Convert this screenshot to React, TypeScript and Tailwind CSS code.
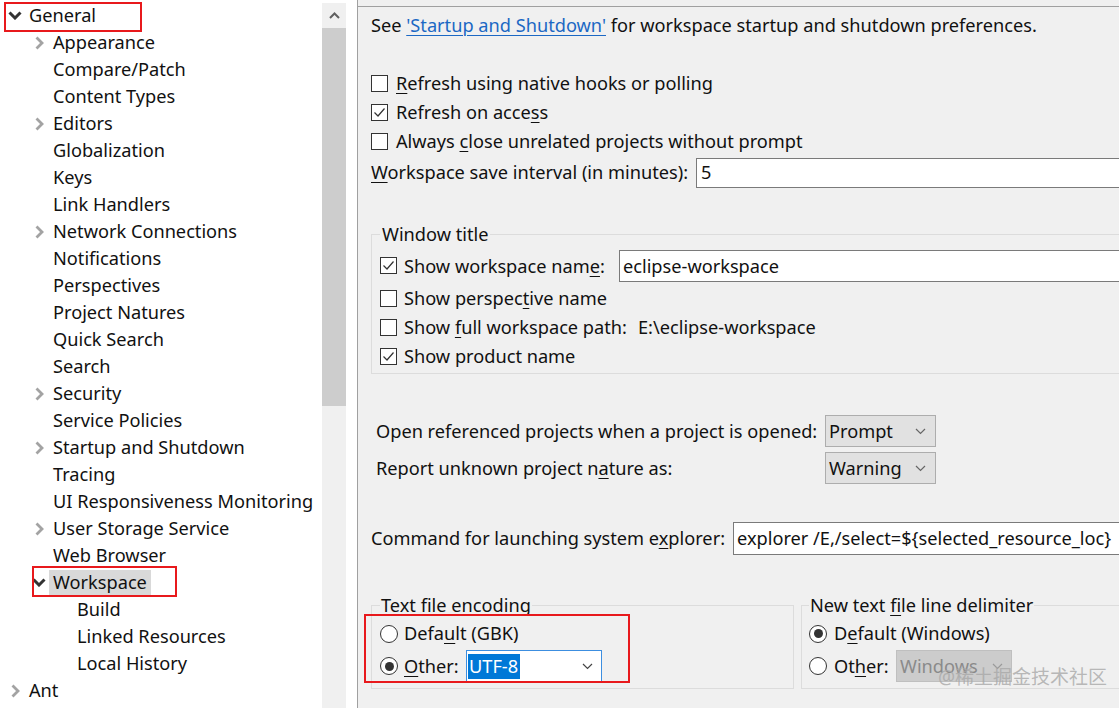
import React from 'react';

const FONT = "font-['Noto_Sans','Noto_Sans_CJK_SC',sans-serif]";

type Node = { label: string; level: number; state?: 'open' | 'closed'; selected?: boolean };

const TREE: Node[] = [
  { label: 'General', level: 0, state: 'open' },
  { label: 'Appearance', level: 1, state: 'closed' },
  { label: 'Compare/Patch', level: 1 },
  { label: 'Content Types', level: 1 },
  { label: 'Editors', level: 1, state: 'closed' },
  { label: 'Globalization', level: 1 },
  { label: 'Keys', level: 1 },
  { label: 'Link Handlers', level: 1 },
  { label: 'Network Connections', level: 1, state: 'closed' },
  { label: 'Notifications', level: 1 },
  { label: 'Perspectives', level: 1 },
  { label: 'Project Natures', level: 1 },
  { label: 'Quick Search', level: 1 },
  { label: 'Search', level: 1 },
  { label: 'Security', level: 1, state: 'closed' },
  { label: 'Service Policies', level: 1 },
  { label: 'Startup and Shutdown', level: 1, state: 'closed' },
  { label: 'Tracing', level: 1 },
  { label: 'UI Responsiveness Monitoring', level: 1 },
  { label: 'User Storage Service', level: 1, state: 'closed' },
  { label: 'Web Browser', level: 1 },
  { label: 'Workspace', level: 1, state: 'open', selected: true },
  { label: 'Build', level: 2 },
  { label: 'Linked Resources', level: 2 },
  { label: 'Local History', level: 2 },
  { label: 'Ant', level: 0, state: 'closed' },
];

const PAD = ['pl-[5px]', 'pl-[29px]', 'pl-[53px]'];

function ChevronDown() {
  return (
    <svg width="14" height="9" viewBox="0 0 14 9" className="ml-[3px]">
      <path d="M1.5 1.5 L7 7 L12.5 1.5" fill="none" stroke="#333" strokeWidth="3" />
    </svg>
  );
}

function ChevronRight() {
  return (
    <svg width="9" height="14" viewBox="0 0 9 14" className="ml-[6px]">
      <path d="M1.5 1.5 L7 7 L1.5 12.5" fill="none" stroke="#a3a3a3" strokeWidth="2.8" />
    </svg>
  );
}

function Tree() {
  return (
    <div className="w-[322px] shrink-0 bg-white pt-[2px]">
      {TREE.map((n) => (
        <div key={n.label} className={`flex items-center h-[27px] ${PAD[n.level]}`}>
          <span className="w-[24px] shrink-0 flex items-center">
            {n.state === 'open' && <ChevronDown />}
            {n.state === 'closed' && <ChevronRight />}
          </span>
          <span
            className={`whitespace-nowrap ${n.selected ? 'bg-[#d9d9d9] -ml-[4px] px-[4px] h-[25px] flex items-center' : ''}`}
          >
            {n.label}
          </span>
        </div>
      ))}
    </div>
  );
}

function Scrollbar() {
  return (
    <div className="w-[24px] shrink-0 mt-[3px] bg-[#f0f0f0] flex flex-col">
      <div className="h-[25px] flex items-center justify-center">
        <svg width="11" height="7" viewBox="0 0 11 7">
          <path d="M1 6 L5.5 1.5 L10 6" fill="none" stroke="#606060" strokeWidth="2" />
        </svg>
      </div>
      <div className="h-[378px] bg-[#cdcdcd]" />
    </div>
  );
}

function Checkbox({ checked }: { checked?: boolean }) {
  return (
    <span className="w-[17px] h-[17px] shrink-0 border border-[#333] bg-white flex items-center justify-center">
      {checked && (
        <svg width="13" height="11" viewBox="0 0 13 11">
          <path d="M1.5 5.5 L5 9 L11.5 1.5" fill="none" stroke="#333" strokeWidth="1.2" />
        </svg>
      )}
    </span>
  );
}

function Radio({ checked }: { checked?: boolean }) {
  return (
    <span className="w-[18px] h-[18px] shrink-0 rounded-full border border-[#333] bg-white flex items-center justify-center">
      {checked && <span className="w-[9px] h-[9px] rounded-full bg-[#333]" />}
    </span>
  );
}

function U({ children }: { children: React.ReactNode }) {
  return <span className="underline underline-offset-[3px] decoration-1">{children}</span>;
}

function SmallChevron({ color }: { color: string }) {
  return (
    <svg width="11" height="7" viewBox="0 0 11 7">
      <path d="M1 1 L5.5 5.5 L10 1" fill="none" stroke={color} strokeWidth="1.2" />
    </svg>
  );
}

function Combo({ value }: { value: string }) {
  return (
    <div className="w-[111px] h-[32px] bg-[#e1e1e1] border border-[#adadad] flex items-center justify-between pl-[3px] pr-[9px]">
      <span>{value}</span>
      <SmallChevron color="#666" />
    </div>
  );
}

function Row({ checked, children }: { checked?: boolean; children: React.ReactNode }) {
  return (
    <div className="h-[29px] flex items-center gap-[8px]">
      <Checkbox checked={checked} />
      <span className="whitespace-nowrap">{children}</span>
    </div>
  );
}

export default function App() {
  return (
    <div className={`relative w-[1119px] h-[708px] overflow-hidden flex bg-white text-[18.2px] leading-none text-[#111] ${FONT}`}>
      <Tree />
      <Scrollbar />
      <div className="w-[11px] shrink-0 bg-white" />

      <div className="flex-1 border-l border-[#a0a0a0] bg-[#f0f0f0] pt-[6px]">
        <div className="w-[800px] h-full border-t border-[#a0a0a0] pl-[13px]">
          <div className="h-[36px] flex items-center whitespace-nowrap">
            See&nbsp;
            <span className="text-[#1c68c4] underline underline-offset-[3px] decoration-1">'Startup and Shutdown'</span>
            &nbsp;for workspace startup and shutdown preferences.
          </div>

          <div className="mt-[26px]">
            <Row>
              <U>R</U>efresh using native hooks or polling
            </Row>
            <Row checked>
              Refresh on acce<U>s</U>s
            </Row>
            <Row>
              Always <U>c</U>lose unrelated projects without prompt
            </Row>
          </div>

          <div className="mt-[1px] h-[31px] flex items-center">
            <span className="w-[325px] shrink-0 whitespace-nowrap">
              <U>W</U>orkspace save interval (in minutes):
            </span>
            <div className="flex-1 h-[30px] bg-white border border-[#7a7a7a] flex items-center pl-[4px]">5</div>
          </div>

          <fieldset className="mt-[33px] border border-[#dcdcdc] px-[8px] pb-[2px]">
            <legend className="px-[2px] leading-[26px]">Window title</legend>
            <div className="mt-[3px] h-[32px] flex items-center">
              <span className="w-[239px] shrink-0 flex items-center gap-[7px]">
                <Checkbox checked />
                <span className="whitespace-nowrap">
                  Show workspace nam<U>e</U>:
                </span>
              </span>
              <div className="flex-1 h-[32px] bg-white border border-[#7a7a7a] flex items-center pl-[3px]">
                eclipse-workspace
              </div>
            </div>
            <div className="mt-[2px] h-[29px] flex items-center gap-[7px]">
              <Checkbox />
              <span className="whitespace-nowrap">
                Show perspec<U>t</U>ive name
              </span>
            </div>
            <div className="h-[29px] flex items-center">
              <span className="w-[258px] shrink-0 flex items-center gap-[7px]">
                <Checkbox />
                <span className="whitespace-nowrap">
                  Show <U>f</U>ull workspace path:
                </span>
              </span>
              <span className="whitespace-nowrap">E:\eclipse-workspace</span>
            </div>
            <div className="h-[29px] flex items-center gap-[7px]">
              <Checkbox checked />
              <span className="whitespace-nowrap">Show product name</span>
            </div>
          </fieldset>

          <div className="mt-[41px] pl-[5px] flex flex-col gap-[5px]">
            <div className="flex items-center">
              <span className="w-[449px] shrink-0 whitespace-nowrap">Open referenced projects when a project is opened:</span>
              <Combo value="Prompt" />
            </div>
            <div className="flex items-center">
              <span className="w-[449px] shrink-0 whitespace-nowrap">
                Report unknown project n<U>a</U>ture as:
              </span>
              <Combo value="Warning" />
            </div>
          </div>

          <div className="mt-[38px] h-[33px] flex items-center">
            <span className="w-[362px] shrink-0 whitespace-nowrap">
              Command for launching system e<U>x</U>plorer:
            </span>
            <div className="flex-1 h-[33px] bg-white border border-[#7a7a7a] flex items-center pl-[3px] whitespace-nowrap overflow-hidden">
              explorer /E,/select=${'{'}selected_resource_loc{'}'}
            </div>
          </div>

          <div className="mt-[37px] flex gap-[7px]">
            <fieldset className="w-[423px] shrink-0 border border-[#dcdcdc] px-[8px] pb-[6px]">
              <legend className="px-[1px] leading-[26px]">
                <U>T</U>ext file encoding
              </legend>
              <div className="h-[31px] flex items-center gap-[6px]">
                <Radio />
                <span className="whitespace-nowrap">
                  Defa<U>u</U>lt (GBK)
                </span>
              </div>
              <div className="mt-[1px] h-[32px] flex items-center">
                <Radio checked />
                <span className="w-[68px] shrink-0 pl-[6px] whitespace-nowrap">
                  <U>O</U>ther:
                </span>
                <div className="w-[136px] h-[32px] bg-white border border-[#3c8ee0] flex items-center justify-between pl-[1px] pr-[8px]">
                  <span className="bg-[#0078d7] text-white h-[25px] flex items-center pl-[1px] pr-[2px]">UTF-8</span>
                  <SmallChevron color="#444" />
                </div>
              </div>
            </fieldset>

            <fieldset className="flex-1 border border-[#dcdcdc] px-[7px] pb-[6px]">
              <legend className="px-[1px] leading-[26px]">
                New text <U>f</U>ile line delimiter
              </legend>
              <div className="h-[31px] flex items-center gap-[7px]">
                <Radio checked />
                <span className="whitespace-nowrap">
                  D<U>e</U>fault (Windows)
                </span>
              </div>
              <div className="mt-[1px] h-[32px] flex items-center">
                <Radio />
                <span className="w-[69px] shrink-0 pl-[7px] whitespace-nowrap">
                  Ot<U>h</U>er:
                </span>
                <div className="w-[116px] h-[32px] bg-[#cccccc] border border-[#bfbfbf] flex items-center justify-between pl-[3px] pr-[8px] text-[#8a8a8a]">
                  <span>Windows</span>
                  <SmallChevron color="#9a9a9a" />
                </div>
              </div>
            </fieldset>
          </div>
        </div>
      </div>

      {/* annotation boxes */}
      <div className="absolute left-[4px] top-[2px] w-[138px] h-[30px] border-2 border-[#e8191c]" />
      <div className="absolute left-[32px] top-[566px] w-[145px] h-[31px] border-2 border-[#e8191c]" />
      <div className="absolute left-[364px] top-[614px] w-[266px] h-[69px] border-2 border-[#e8191c]" />

      {/* watermark */}
      <div className="absolute left-[938px] top-[668px] text-[19px] leading-none text-[#a8a8a8]/80 whitespace-nowrap">
        @稀土掘金技术社区
      </div>
    </div>
  );
}
